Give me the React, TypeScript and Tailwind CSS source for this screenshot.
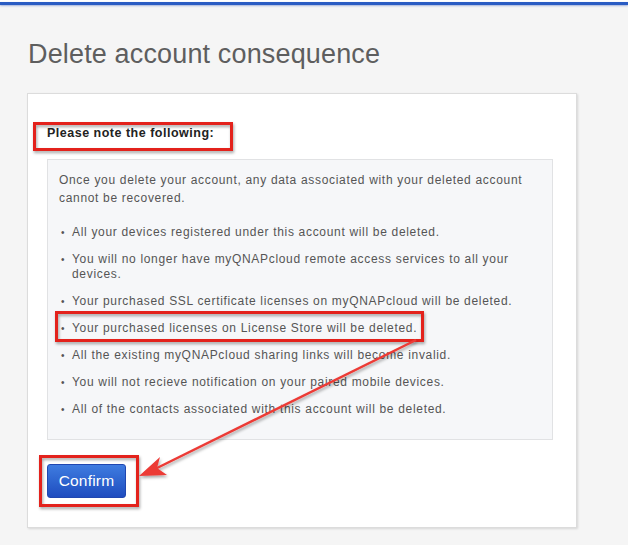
import React from 'react'

const items: string[][] = [
  ['All your devices registered under this account will be deleted.'],
  ['You will no longer have myQNAPcloud remote access services to all your', 'devices.'],
  ['Your purchased SSL certificate licenses on myQNAPcloud will be deleted.'],
  ['Your purchased licenses on License Store will be deleted.'],
  ['All the existing myQNAPcloud sharing links will become invalid.'],
  ['You will not recieve notification on your paired mobile devices.'],
  ['All of the contacts associated with this account will be deleted.'],
]

// red annotation marks drawn over the screenshot
function Annotations() {
  return (
    <svg className="absolute inset-0 pointer-events-none" width="628" height="545" viewBox="0 0 628 545">
      <defs>
        <filter id="sh" x="-10%" y="-10%" width="130%" height="150%">
          <feDropShadow dx="1" dy="2" stdDeviation="1.5" floodColor="#000" floodOpacity="0.35" />
        </filter>
      </defs>
      <g fill="none" stroke="#e3201b" strokeWidth="3" filter="url(#sh)">
        <rect x="34.5" y="123.5" width="197" height="26" />
        <rect x="56.5" y="312.5" width="366" height="28" />
        <rect x="40.5" y="456.5" width="97" height="49" />
      </g>
      <g filter="url(#sh)">
        <line x1="416" y1="340" x2="155" y2="469" stroke="#ec3a36" strokeWidth="2.5" />
        <polygon points="139,476 160,457 157,468 167,475" fill="#ec3a36" />
      </g>
    </svg>
  )
}

export default function App() {
  return (
    <div className="relative w-[628px] h-[545px] overflow-hidden bg-[#f5f5f5] font-['Liberation_Sans',Arial,sans-serif]">
      <div className="h-[2px] bg-white" />
      <div className="h-[3px] bg-[#2a5cc3] shadow-[0_1px_2px_rgba(40,80,180,0.4)]" />

      <h1 className="mt-[34px] ml-[28px] text-[27px] leading-[30px] font-light tracking-[0.15px] text-[#5e5e5e]">
        Delete account consequence
      </h1>

      <div className="mt-[24px] ml-[27px] w-[550px] h-[435px] bg-white border border-[#dcdcdc] shadow-[1px_1px_2px_rgba(0,0,0,0.12)] pl-[19px] pt-[31px]">
        <p className="text-[12.5px] leading-[16px] font-bold tracking-[0.5px] text-[#222]">Please note the following:</p>

        <div className="mt-[18px] w-[506px] h-[281px] bg-[#f6f7f9] border border-[#e1e2e4] pl-[11px] pt-[11px] text-[12px] tracking-[0.68px] text-[#555]">
          <p className="leading-[18px]">
            Once you delete your account, any data associated with your deleted account
            <br />
            cannot be recovered.
          </p>
          <ul className="mt-[18px] flex flex-col gap-[12px]">
            {items.map((lines, i) => (
              <li key={i} className="flex leading-[15px]">
                <span className="w-[13px] pl-[2px] shrink-0 text-[10px]">•</span>
                <span>
                  {lines.map((l, j) => (
                    <span key={j} className="block">{l}</span>
                  ))}
                </span>
              </li>
            ))}
          </ul>
        </div>

        <button className="mt-[24px] w-[79px] h-[34px] rounded-[3px] bg-gradient-to-b from-[#3f7ce0] to-[#1f4cbf] border border-[#2047b0] text-white text-[15.5px] tracking-[0.2px]">
          Confirm
        </button>
      </div>

      <Annotations />
    </div>
  )
}
